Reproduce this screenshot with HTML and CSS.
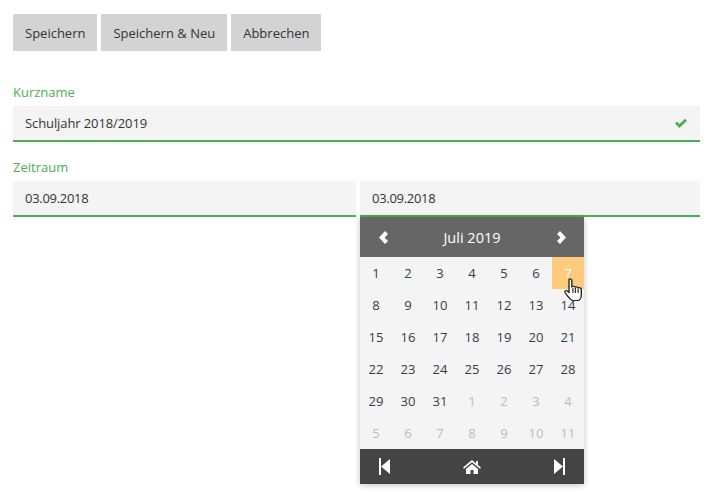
FILE: index.html
```html
<!DOCTYPE html>
<html lang="de">
<head>
    <meta charset="UTF-8">
    <title>Schuljahr bearbeiten</title>
    <link rel="stylesheet" href="styles.css">
</head>
<body>
    <div class="toolbar">
        <button>Speichern</button>
        <button>Speichern &amp; Neu</button>
        <button>Abbrechen</button>
    </div>

    <div class="field">
        <label>Kurzname</label>
        <div class="input valid">
            <span class="tight">Schuljahr 2018/2019</span>
            <svg class="check" width="14" height="11" viewBox="0 0 14 11"><path d="M1 5.6 L3 3.6 L5.4 6 L11 .8 L13 2.8 L5.4 10 Z" fill="#4caf50"/></svg>
        </div>
    </div>

    <div class="field">
        <label>Zeitraum</label>
        <div class="range">
            <div class="input"><span class="date">03.09.2018</span></div>
            <div class="range-end">
                <div class="input"><span class="date">03.09.2018</span></div>
                <div class="calendar">
                    <div class="cal-head">
                        <svg width="10" height="13" viewBox="0 0 10 13"><path d="M7 0 L10 3 L6.5 6.5 L10 10 L7 13 L1 6.5 Z" fill="#fff"/></svg>
                        <span>Juli 2019</span>
                        <svg width="10" height="13" viewBox="0 0 10 13"><path d="M4 0 L1 3 L4.5 6.5 L1 10 L4 13 L10 6.5 Z" fill="#fff"/></svg>
                    </div>
                    <div class="cal-grid">
                        <span>1</span><span>2</span><span>3</span><span>4</span><span>5</span><span>6</span><span class="hover">7</span>
                        <span>8</span><span>9</span><span>10</span><span>11</span><span>12</span><span>13</span><span>14</span>
                        <span>15</span><span>16</span><span>17</span><span>18</span><span>19</span><span>20</span><span>21</span>
                        <span>22</span><span>23</span><span>24</span><span>25</span><span>26</span><span>27</span><span>28</span>
                        <span>29</span><span>30</span><span>31</span><span class="other">1</span><span class="other">2</span><span class="other">3</span><span class="other">4</span>
                        <span class="other">5</span><span class="other">6</span><span class="other">7</span><span class="other">8</span><span class="other">9</span><span class="other">10</span><span class="other">11</span>
                    </div>
                    <div class="cal-foot">
                        <svg width="12" height="17" viewBox="0 0 12 17"><path d="M1 0 H3 V17 H1 Z M12 1 V16 L3 8.5 Z" fill="#fff"/></svg>
                        <svg width="18" height="14" viewBox="0 0 18 14"><path d="M9 0 L13 3.4 V1 H15 V5.1 L18 7.6 L17 8.8 L9 2.2 L1 8.8 L0 7.6 Z M3 9 L9 4 L15 9 V14 H10.5 V10 H7.5 V14 H3 Z" fill="#fff"/></svg>
                        <svg width="12" height="17" viewBox="0 0 12 17"><path d="M9 0 H11 V17 H9 Z M0 1 V16 L9 8.5 Z" fill="#fff"/></svg>
                    </div>
                    <svg class="pointer" width="19" height="24" viewBox="0 0 17 24" preserveAspectRatio="none"><path d="M4.5 1.5 C5.5 .5 7 1 7 2.5 V9 L8 8.4 C9 8 10 8.6 10 9.2 C11 8.6 12 9 12.4 9.8 C13.4 9.4 15.5 9.8 15.5 11.5 V17 C15.5 20 14 22.5 12 22.5 H8 C6 22.5 4.5 20 2.5 17 L1 14.5 C.5 13 2 12 3.2 13 L4.5 14.5 Z" fill="#fff" stroke="#222" stroke-width="1.2" stroke-linejoin="round"/><path d="M8 10 V15 M10.2 10 V15 M12.6 10.5 V15" stroke="#222" stroke-width="1" fill="none"/></svg>
                </div>
            </div>
        </div>
    </div>
</body>
</html>
```
FILE: styles.css
```css
html, body {
    height: 100%;
}

body {
    font-family: "Open Sans", sans-serif;
    font-size: 13px;
    color: #333;
    background: #fff;
    margin: 0;
    padding: 14px 11px 0 13px;
    box-sizing: border-box;
}

.toolbar {
    display: flex;
    gap: 4px;
    margin-bottom: 32px;
}

button {
    height: 37px;
    padding: 0 12px;
    border: none;
    background: #d3d3d3;
    color: #333;
    font: inherit;
}

.field {
    margin-bottom: 16px;
}

.field label {
    display: block;
    height: 23px;
    line-height: 18px;
    color: #4caf50;
}

.input {
    display: flex;
    justify-content: space-between;
    align-items: center;
    box-sizing: border-box;
    height: 36px;
    padding: 0 12px;
    background: #f4f4f4;
    border-bottom: 2px solid #4caf50;
}

.tight {
    letter-spacing: -0.1px;
}

.date {
    letter-spacing: -0.3px;
}

.range {
    display: flex;
    align-items: flex-start;
    gap: 4px;
}

.range > .input {
    width: 343px;
}

.range-end {
    flex: 1;
}

.calendar {
    position: relative;
    width: 224px;
    background: #f4f4f4;
    box-shadow: 0 1px 6px rgba(0,0,0,0.25);
}

.cal-head, .cal-foot {
    display: flex;
    justify-content: space-between;
    align-items: center;
    padding: 0 18px;
    color: #fff;
}

.cal-head {
    height: 40px;
    background: #666;
    font-size: 14.5px;
}

.cal-foot {
    height: 35px;
    background: #444;
}

.cal-grid {
    display: grid;
    grid-template-columns: repeat(7, 32px);
    grid-auto-rows: 32px;
    color: #2c3e50;
}

.cal-grid span {
    display: flex;
    justify-content: center;
    align-items: center;
}

.cal-grid .hover {
    background: #fecb7d;
    color: #fff;
}

.cal-grid .other {
    color: #bbb;
}

.pointer {
    position: absolute;
    top: 61px;
    left: 204px;
}
```
